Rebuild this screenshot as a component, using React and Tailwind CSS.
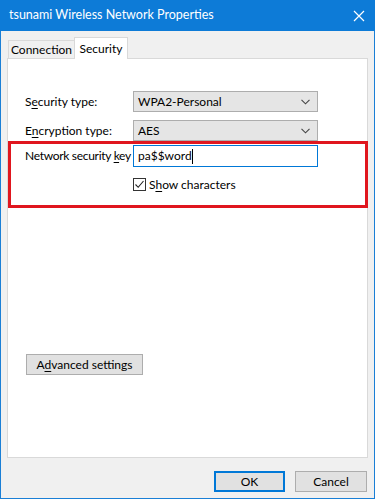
import React from 'react'

const font = { fontFamily: 'Lato, "Segoe UI", sans-serif' }

function Chevron() {
  return (
    <svg width="9" height="6" viewBox="0 0 9 6" className="shrink-0">
      <path d="M0.5 0.8 L4.5 4.8 L8.5 0.8" fill="none" stroke="#444" strokeWidth="1.1" />
    </svg>
  )
}

function Select({ value }) {
  return (
    <div className="flex items-center justify-between w-[185px] h-[21px] bg-[#e5e5e5] border border-[#adadad] pl-[4px] pr-[7px]">
      <span className="text-[12px] text-black leading-none">{value}</span>
      <Chevron />
    </div>
  )
}

function Label({ pre, key_, post, className = '' }) {
  return (
    <span className={`w-[108px] shrink-0 whitespace-nowrap text-[12px] text-black leading-none ${className}`}>
      {pre}<span className="underline underline-offset-2">{key_}</span>{post}
    </span>
  )
}

function Button({ children, primary, className = '' }) {
  return (
    <button
      className={`h-[21px] flex items-center justify-center text-[12px] text-black bg-[#e1e1e1] ${primary ? 'border-2 border-[#0078d7]' : 'border border-[#adadad]'} ${className}`}
    >
      {children}
    </button>
  )
}

export default function App() {
  return (
    <div className="w-[375px] h-[499px] flex flex-col bg-[#f0f0f0] border-x border-b border-[#1a7fd6] select-none" style={font}>
      {/* title bar */}
      <div className="h-[31px] -mx-px bg-[#0d7bd7] flex items-center justify-between pl-[9px] pr-[10px]">
        <span className="text-white text-[12.5px]">tsunami Wireless Network Properties</span>
        <svg width="12" height="12" viewBox="0 0 12 12">
          <path d="M1 1 L11 11 M11 1 L1 11" stroke="white" strokeWidth="1.2" />
        </svg>
      </div>

      <div className="flex-1 flex flex-col px-[6px]">
        {/* tabs */}
        <div className="flex items-end h-[27px] pl-[1px]">
          <div className="w-[66px] h-[18px] flex items-center justify-center border border-b-0 border-r-0 border-[#d9d9d9] bg-[#f0f0f0] text-[12px] text-black">
            Connection
          </div>
          <div className="w-[54px] h-[22px] -mb-px relative flex items-center justify-center border border-b-0 border-[#d9d9d9] bg-white text-[12px] text-black">
            Security
          </div>
        </div>

        {/* panel */}
        <div className="h-[400px] flex flex-col border border-[#d9d9d9] bg-white">
          <div className="flex flex-col gap-[8px] pt-[32px] pl-[17px]">
            <div className="flex items-center">
              <Label pre="S" key_="e" post="curity type:" />
              <Select value="WPA2-Personal" />
            </div>
            <div className="flex items-center">
              <Label pre="E" key_="n" post="cryption type:" />
              <Select value="AES" />
            </div>
          </div>

          <div className="-mr-px h-[67px] border-[3px] border-[#e0161e] flex flex-col pt-[1px] pl-[14px]">
            <div className="flex items-center">
              <Label pre="Network security " key_="k" post="ey" className="tracking-[-0.3px]" />
              <div className="w-[185px] h-[22px] border border-[#0078d7] flex items-center pl-[4px]">
                <span className="text-[12px] text-black leading-none">pa$$word</span>
                <span className="w-px h-[15px] bg-black" />
              </div>
            </div>
            <div className="flex items-center gap-[3px] mt-[11px] ml-[108px]">
              <div className="w-[13px] h-[13px] border border-[#333] bg-white flex items-center justify-center">
                <svg width="11" height="11" viewBox="0 0 11 11">
                  <path d="M1.5 5.5 L4.2 8.3 L9.5 2" fill="none" stroke="#222" strokeWidth="1.1" />
                </svg>
              </div>
              <span className="text-[12px] text-black leading-none">
                S<span className="underline underline-offset-2">h</span>ow characters
              </span>
            </div>
          </div>

          <div className="mt-[146px] pl-[18px]">
            <Button className="w-[117px]">
              <span>A<span className="underline underline-offset-2">d</span>vanced settings</span>
            </Button>
          </div>
        </div>

        {/* footer buttons */}
        <div className="flex justify-end gap-[10px] mt-[13px] pr-[1px]">
          <Button primary className="w-[71px]">OK</Button>
          <Button className="w-[72px]">Cancel</Button>
        </div>
      </div>
    </div>
  )
}
